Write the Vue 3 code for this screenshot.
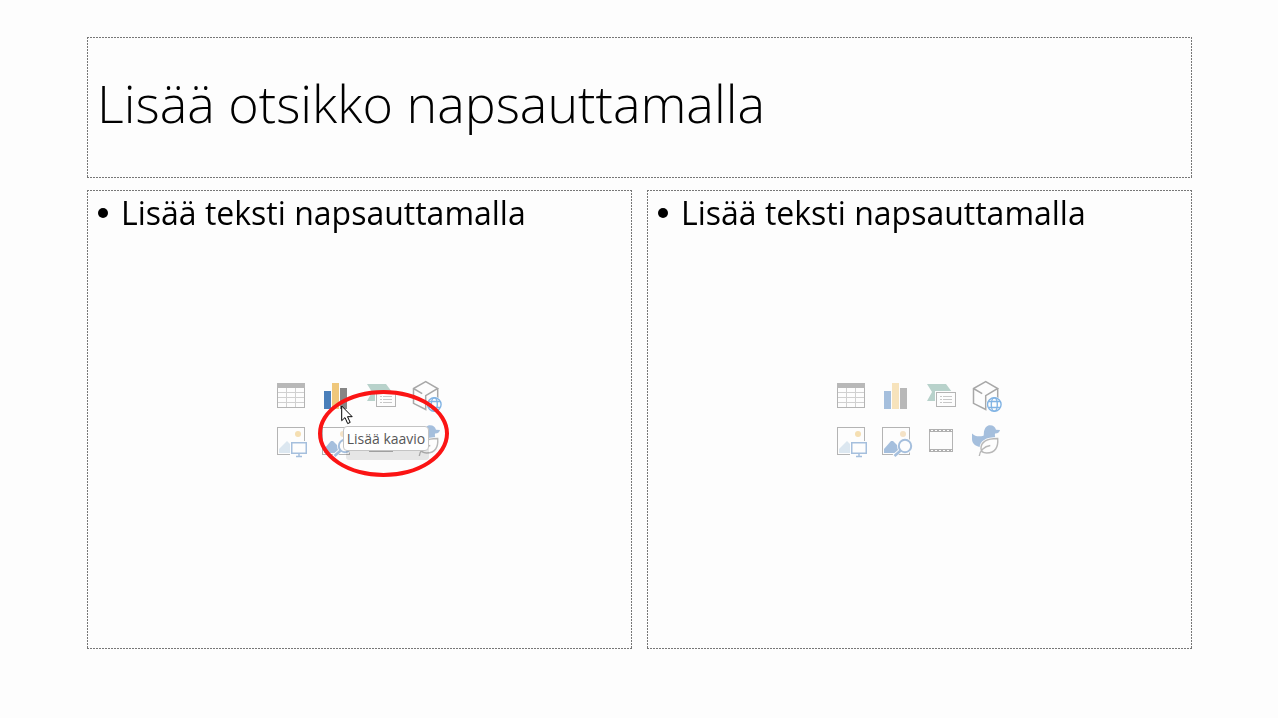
<script setup>
const columns = ['left', 'right']
const tools = [
  { id: 'table', label: 'Lisää taulukko' },
  { id: 'chart', label: 'Lisää kaavio' },
  { id: 'smartart', label: 'Lisää SmartArt-grafiikka' },
  { id: 'model', label: '3D-mallit' },
  { id: 'picture', label: 'Kuvat' },
  { id: 'search', label: 'Online-kuvat' },
  { id: 'video', label: 'Lisää video' },
  { id: 'icon', label: 'Lisää kuvake' },
]
</script>

<template>
  <main class="slide">
    <header class="frame title">
      <h1>Lisää otsikko napsauttamalla</h1>
    </header>
    <div class="columns">
      <section v-for="col in columns" :key="col" class="frame content">
        <ul class="prompt">
          <li>Lisää teksti napsauttamalla</li>
        </ul>
        <div class="tools">
          <div v-for="t in tools" :key="t.id" class="cell">
            <button type="button" class="tool" :class="{ active: col === 'left' && t.id === 'chart' }" :aria-label="t.label">
              <svg v-if="t.id === 'table'" viewBox="0 0 32 32">
                <path d="M10.5 7v19M19.5 7v19M2 11.5h26M2 16.5h26M2 21.5h26" stroke="#d0d0d0" fill="none" />
                <rect x="1.500" y="2.500" width="27" height="24" fill="none" stroke="#b4b4b4" />
                <rect x="1" y="2" width="28" height="5" fill="#b8b8b8" />
              </svg>
              <svg v-else-if="t.id === 'chart'" viewBox="0 0 32 32">
                <rect class="bar-a" x="3" y="10" width="7" height="18" />
                <rect class="bar-b" x="11" y="2" width="7" height="26" />
                <rect class="bar-c" x="19" y="7" width="7" height="21" />
              </svg>
              <svg v-else-if="t.id === 'smartart'" viewBox="0 0 32 32">
                <path d="M1 3h19l6 8-6 9H1l5-9z" fill="#b8d2cb" />
                <rect x="9" y="10" width="22" height="17" fill="#fdfdfd" />
                <rect x="10.500" y="11.500" width="19" height="14" fill="#fdfdfd" stroke="#b4b4b4" />
                <path d="M14 15.500h2m1 0h9M14 18.500h2m1 0h9M14 21.500h2m1 0h9" stroke="#c8c8c8" fill="none" />
              </svg>
              <svg v-else-if="t.id === 'model'" viewBox="0 0 32 32">
                <path d="M14.700 .7L2.500 7.500v14.800l12.200 6.200V14.700l12-7.200zM2.500 7.500l8.700 5.200M26.700 7.500v14" fill="none" stroke="#a8a8a8" stroke-width="1.500" />
                <circle cx="23.300" cy="23.500" r="7.800" fill="#fdfdfd" />
                <g fill="none" stroke="#82b4e4" stroke-width="1.400">
                  <circle cx="23.300" cy="23.500" r="6.800" />
                  <ellipse cx="23.300" cy="23.500" rx="3" ry="6.800" />
                  <path d="M17.500 20.500h11.600M17.500 26.500h11.600" />
                </g>
              </svg>
              <svg v-else-if="t.id === 'picture'" viewBox="0 0 32 32">
                <rect x="1.500" y="1.500" width="27" height="27" fill="none" stroke="#b4b4b4" />
                <circle cx="22" cy="8" r="3" fill="#f5dfb2" />
                <path d="M3 27v-4l8-8 3 3v9z" fill="#dce7f0" />
                <rect x="14" y="15" width="18" height="17" fill="#fdfdfd" />
                <rect x="15.750" y="16.750" width="14.500" height="10.500" fill="#fdfdfd" stroke="#a5bfdd" stroke-width="1.500" />
                <path d="M23 28v2M20 30.500h6" stroke="#a5bfdd" stroke-width="1.500" />
              </svg>
              <svg v-else-if="t.id === 'search'" viewBox="0 0 32 32">
                <rect x="1.500" y="1.500" width="27" height="27" fill="none" stroke="#b4b4b4" />
                <circle cx="22" cy="8" r="3" fill="#f4e2c6" />
                <path d="M3 27v-4l7-8h2l8 8v4z" fill="#a5bfdd" />
                <path d="M13 30l7-6" stroke="#fdfdfd" stroke-width="4" />
                <circle cx="24" cy="20" r="8" fill="#fdfdfd" />
                <circle cx="24" cy="20" r="6.200" fill="#fdfdfd" stroke="#a5bfdd" stroke-width="2" />
                <path d="M13.500 30l6.200-5.500" stroke="#a5bfdd" stroke-width="2.600" />
              </svg>
              <svg v-else-if="t.id === 'video'" viewBox="0 0 32 32">
                <rect x="3.500" y="3.500" width="23" height="22" fill="#fdfdfd" stroke="#b4b4b4" />
                <path d="M3 4.500h24M3 24.500h24" stroke="#b0b0b0" stroke-width="3" />
                <path d="M5 4.500h21M5 24.500h21" stroke="#fdfdfd" stroke-width="1" stroke-dasharray="2 2" />
              </svg>
              <svg v-else viewBox="0 0 32 32">
                <path d="M1 7.500c3 3 7 3.500 11.500 2.200C13 8.300 12.700 7.500 13 5.500 13.800 1.500 16-.8 19-.8c3.500 0 5 1.600 6 4.600l4 .3c-.3 2-2 3.500-5 3.400-.5 2 .5 4 .4 6.500C22 19.500 17 21.500 11 21.300 4 20.800 1 17 1 13z" fill="#a5bfdd" />
                <path d="M26.700 12.500c.7 8-2 14.500-11 14.500-3 0-5.700-1-5.700-4.500 0-7.500 6-10 16.700-10z" fill="#fdfdfd" stroke="#fdfdfd" stroke-width="3" />
                <path d="M26.700 12.500c.7 8-2 14.500-11 14.500-3 0-5.700-1-5.700-4.500 0-7.500 6-10 16.700-10zM8.300 30c.5-5 4.500-9.500 11-10.500" fill="none" stroke="#b8b8b8" stroke-width="1.400" />
              </svg>
            </button>
            <template v-if="col === 'left' && t.id === 'chart'">
              <span class="shade"></span>
              <span class="tooltip" role="tooltip">Lisää kaavio</span>
              <span class="ring"></span>
              <svg class="cursor" viewBox="0 0 12 20">
                <path d="M.7 1v14.700l3.300-3.100 2.700 6 2.500-1.200-2.700-5.700h4.700z" fill="#fff" stroke="#000" />
              </svg>
            </template>
          </div>
        </div>
      </section>
    </div>
  </main>
</template>

<style>
body {
  background: #fdfdfd;
}
</style>

<style scoped>
.slide {
  box-sizing: border-box;
  min-height: 100vh;
  padding: 37px 86px 69px 87px;
  display: flex;
  flex-direction: column;
  gap: 12px;
  background: #fdfdfd;
  color: #000;
  font-family: "Open Sans", "Noto Sans", sans-serif;
}
.frame {
  --dash: #777 0 2px, transparent 2px 3px;
  box-sizing: border-box;
  background:
    repeating-linear-gradient(90deg, var(--dash)) top / 100% 1px no-repeat,
    repeating-linear-gradient(90deg, var(--dash)) bottom / 100% 1px no-repeat,
    repeating-linear-gradient(180deg, var(--dash)) left / 1px 100% no-repeat,
    repeating-linear-gradient(180deg, var(--dash)) right / 1px 100% no-repeat;
}
.title {
  min-height: 141px;
  padding: 0 10px 10px;
  display: flex;
  align-items: center;
}
h1 {
  margin: 0;
  font-size: 52px;
  line-height: 64px;
  font-weight: 330;
}
.columns {
  flex: 1;
  display: grid;
  grid-template-columns: 1fr 1fr;
  gap: 15px;
}
.content {
  display: grid;
}
.content > * {
  grid-area: 1 / 1;
}
.prompt {
  margin: 0;
  padding: 3px 11px;
  list-style: none;
  font-size: 32px;
  line-height: 40px;
}
.prompt li {
  display: flex;
  align-items: center;
  gap: 13px;
}
.prompt li::before {
  content: "";
  width: 10px;
  height: 10px;
  border-radius: 50%;
  background: #000;
}
.tools {
  place-self: center;
  display: grid;
  grid-template-columns: repeat(4, 32px);
  gap: 13px;
}
.cell {
  position: relative;
  height: 32px;
}
.tool {
  display: block;
  width: 32px;
  height: 32px;
  padding: 0;
  border: 0;
  background: none;
}
.tool svg {
  display: block;
  width: 32px;
  height: 32px;
  overflow: visible;
}
.bar-a { fill: #a5bfdd; }
.bar-b { fill: #f7e3bc; }
.bar-c { fill: #b8b8b8; }
.active .bar-a { fill: #4a7fba; }
.active .bar-b { fill: #efc77b; }
.active .bar-c { fill: #868686; }
.shade {
  position: absolute;
  z-index: 1;
  left: 25px;
  top: 66px;
  width: 83px;
  height: 13px;
  border-radius: 3px;
  background: #e8e8e8;
  mix-blend-mode: multiply;
}
.tooltip {
  position: absolute;
  z-index: 2;
  left: 22px;
  top: 45px;
  box-sizing: border-box;
  width: 86px;
  height: 25px;
  border: 1px solid #c4c4c4;
  border-radius: 4px;
  background: #fff;
  color: #575757;
  font-size: 14px;
  line-height: 23px;
  text-align: center;
  white-space: nowrap;
}
.ring {
  position: absolute;
  z-index: 3;
  left: -3px;
  top: 9px;
  box-sizing: border-box;
  width: 131px;
  height: 87px;
  border: 4px solid #fb1414;
  border-radius: 50%;
  pointer-events: none;
}
.cursor {
  position: absolute;
  z-index: 4;
  left: 20px;
  top: 24px;
  width: 12px;
  height: 20px;
}
</style>
